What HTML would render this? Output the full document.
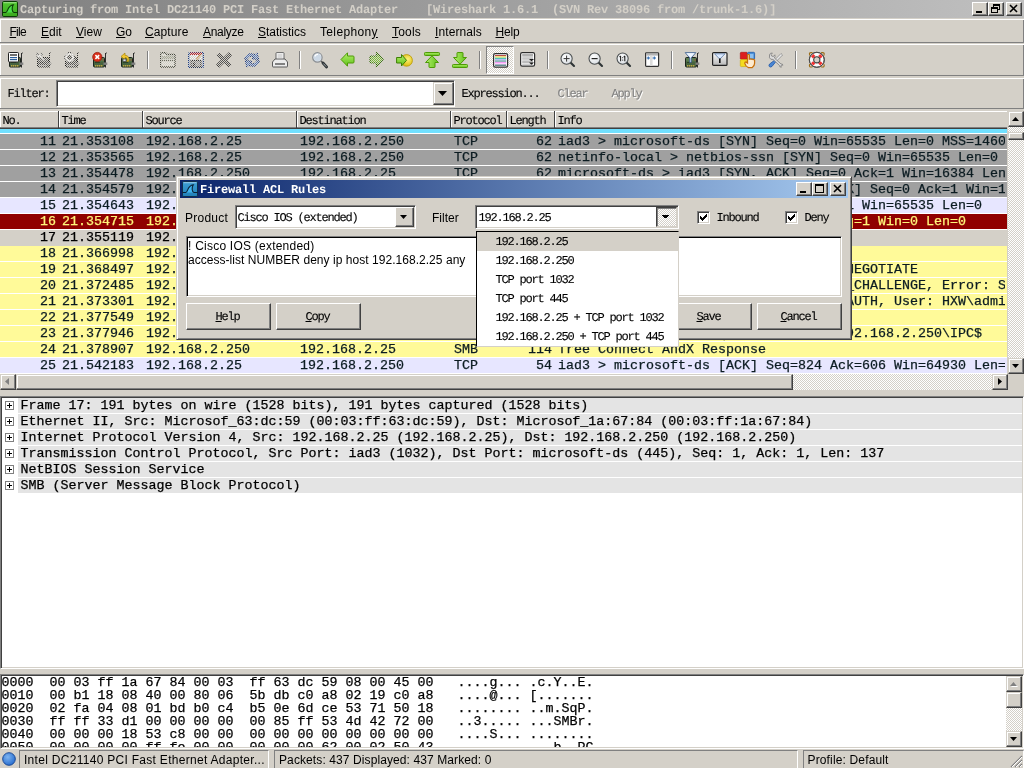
<!DOCTYPE html>
<html><head><meta charset="utf-8"><title>Wireshark</title><style>
*{box-sizing:border-box;margin:0;padding:0}
html,body{width:1024px;height:768px;overflow:hidden;background:#d4d0c8;font-family:"Liberation Sans",sans-serif;color:#000}
.a{position:absolute}
.t{position:absolute;white-space:pre;line-height:1}
.mono{font-family:"Liberation Mono",monospace;font-size:13.333px;-webkit-text-stroke-width:0.25px}
.sim{font-family:"Liberation Mono",monospace;font-size:12px;letter-spacing:-1.2px;text-rendering:geometricPrecision;margin-left:-0.5px;margin-top:0px;-webkit-text-stroke-width:0.1px}
.simb{font-family:"Liberation Mono",monospace;font-size:12px;letter-spacing:-0.2px;font-weight:bold;text-rendering:geometricPrecision}
.tah{font-family:"Liberation Sans",sans-serif;font-size:12px;}
.row{position:absolute;left:0;width:1007px;height:15px;overflow:hidden}
.row span{position:absolute;top:1px;white-space:pre;line-height:14px;font-family:"Liberation Mono",monospace;font-size:13.333px;-webkit-text-stroke-width:0.25px}
.raised{border:1px solid;border-color:#fff #404040 #404040 #fff;box-shadow:inset -1px -1px 0 #808080,inset 1px 1px 0 #d4d0c8;background:#d4d0c8}
.btn{position:absolute;background:#d4d0c8;border:1px solid;border-color:#fff #404040 #404040 #fff;box-shadow:inset -1px -1px 0 #808080}
.btn2{position:absolute;background:#d4d0c8;border:1px solid;border-color:#d4d0c8 #404040 #404040 #d4d0c8;box-shadow:inset -1px -1px 0 #808080,inset 1px 1px 0 #fff}
.sunk{position:absolute;background:#fff;border:1px solid;border-color:#808080 #fff #fff #808080;box-shadow:inset 1px 1px 0 #404040,inset -1px -1px 0 #d4d0c8}
.dither{background-image:conic-gradient(#fff 25%,#d4d0c8 0 50%,#fff 0 75%,#d4d0c8 0);background-size:2px 2px}
u{text-decoration:underline;text-underline-offset:1px}
</style></head><body><div id="root" style="position:absolute;left:0;top:0;width:1024px;height:768px;will-change:transform">
<div class="a" style="left:0;top:0;width:1024px;height:18px;background:linear-gradient(90deg,#808080,#c0c0c0)"></div>
<svg class="a" style="left:2px;top:1px" width="16" height="16" viewBox="0 0 16 16"><defs><linearGradient id="wg" x1="0" y1="0" x2="0" y2="1"><stop offset="0" stop-color="#52c832"/><stop offset="1" stop-color="#3aa81e"/></linearGradient></defs><rect x="0.5" y="0.5" width="15" height="15" rx="1.2" fill="url(#wg)" stroke="#0c3c06"/><rect x="1.5" y="1.2" width="13" height="1" fill="#fff" opacity=".45"/><path d="M4 11.5 C6 11 5.5 4.5 11.3 3.8 C9.8 6.5 10 10.5 12 11.5 Z" fill="#4ae04a"/><path d="M0.5 11.5 H3.8 C6 11.5 5.2 4.4 11.3 3.8 C9.6 6.5 9.8 11 12 11.5 H15.5" fill="none" stroke="#0c3c06" stroke-width="1.1"/></svg>
<div class="t simb" style="left:20px;top:4px;color:#d4d0c8">Capturing from Intel DC21140 PCI Fast Ethernet Adapter    [Wireshark 1.6.1  (SVN Rev 38096 from /trunk-1.6)]</div>
<div class="btn" style="left:972px;top:2px;width:16px;height:14px"></div>
<div class="btn" style="left:988px;top:2px;width:16px;height:14px"></div>
<div class="btn" style="left:1006px;top:2px;width:16px;height:14px"></div>
<div class="a" style="left:976px;top:11px;width:6px;height:2px;background:#000"></div>
<svg class="a" style="left:988px;top:2px" width="16" height="14"><rect x="5.5" y="2.5" width="6" height="5" fill="none" stroke="#000"/><rect x="5" y="2" width="7" height="2" fill="#000"/><rect x="3.5" y="5.5" width="6" height="5" fill="#d4d0c8" stroke="#000"/><rect x="3" y="5" width="7" height="2" fill="#000"/></svg>
<svg class="a" style="left:1006px;top:2px" width="16" height="14"><path d="M4 3 L11 10 M11 3 L4 10" stroke="#000" stroke-width="1.6"/></svg>
<div class="a" style="left:0;top:19px;width:1024px;height:1px;background:#fff"></div>
<div class="a" style="left:0;top:42px;width:1024px;height:1px;background:#808080"></div>
<div class="a" style="left:0;top:44px;width:1024px;height:1px;background:#fff"></div>
<div class="a" style="left:0;top:19px;width:1px;height:23px;background:#fff"></div>
<div class="a" style="left:1023px;top:20px;width:1px;height:22px;background:#808080"></div>
<div class="a" style="left:0;top:44px;width:1px;height:31px;background:#fff"></div>
<div class="a" style="left:1023px;top:45px;width:1px;height:30px;background:#808080"></div>
<div class="a" style="left:0;top:78px;width:1px;height:30px;background:#fff"></div>
<div class="a" style="left:1023px;top:79px;width:1px;height:29px;background:#808080"></div>
<div class="t tah" style="left:9.5px;top:26px;letter-spacing:-0.75px"><u>F</u>ile</div>
<div class="t tah" style="left:41px;top:26px;letter-spacing:0px"><u>E</u>dit</div>
<div class="t tah" style="left:76px;top:26px;letter-spacing:0px"><u>V</u>iew</div>
<div class="t tah" style="left:116px;top:26px;letter-spacing:0px"><u>G</u>o</div>
<div class="t tah" style="left:145px;top:26px;letter-spacing:0.1px"><u>C</u>apture</div>
<div class="t tah" style="left:203px;top:26px;letter-spacing:-0.3px"><u>A</u>nalyze</div>
<div class="t tah" style="left:258px;top:26px;letter-spacing:0px"><u>S</u>tatistics</div>
<div class="t tah" style="left:320px;top:26px;letter-spacing:0.35px">Telephon<u>y</u></div>
<div class="t tah" style="left:392px;top:26px;letter-spacing:0.2px"><u>T</u>ools</div>
<div class="t tah" style="left:435px;top:26px;letter-spacing:0.1px"><u>I</u>nternals</div>
<div class="t tah" style="left:495.5px;top:26px;letter-spacing:-0.2px"><u>H</u>elp</div>
<div class="a" style="left:0;top:75px;width:1024px;height:1px;background:#808080"></div>
<div class="a" style="left:0;top:78px;width:1024px;height:1px;background:#fff"></div>
<svg width="0" height="0" style="position:absolute"><defs><pattern id="chk" width="2" height="2" patternUnits="userSpaceOnUse"><rect width="2" height="2" fill="#000"/><rect x="0" y="0" width="1" height="1" fill="#fff"/><rect x="1" y="1" width="1" height="1" fill="#fff"/></pattern><mask id="dm" maskUnits="userSpaceOnUse" x="0" y="0" width="16" height="16"><rect width="16" height="16" fill="url(#chk)"/></mask><linearGradient id="gg" x1="0" y1="0" x2="0" y2="1"><stop offset="0" stop-color="#b4ee6a"/><stop offset="1" stop-color="#5fc21a"/></linearGradient><linearGradient id="gg2" x1="0" y1="0" x2="1" y2="0"><stop offset="0" stop-color="#b4ee6a"/><stop offset="1" stop-color="#5fc21a"/></linearGradient><linearGradient id="gry" x1="0" y1="0" x2="0" y2="1"><stop offset="0" stop-color="#fdfdfd"/><stop offset="1" stop-color="#b8b8b8"/></linearGradient><radialGradient id="lens" cx="40%" cy="35%" r="70%"><stop offset="0" stop-color="#ffffff"/><stop offset="1" stop-color="#d8dde2"/></radialGradient><radialGradient id="yel" cx="60%" cy="40%" r="70%"><stop offset="0" stop-color="#fff27a"/><stop offset="1" stop-color="#d6b400"/></radialGradient><g id="card"><path d="M13.5 1.5 L14.8 0.8" stroke="#2b2b2b" stroke-width="1"/><rect x="13" y="1" width="1" height="14.5" fill="#2b2b2b"/><rect x="1.5" y="5.5" width="11" height="9.5" rx="1" fill="#46633f" stroke="#1c241c"/><rect x="2" y="6" width="10" height="3.5" fill="#587a50"/><rect x="3" y="10" width="5" height="1" fill="#2c4428"/><rect x="3" y="13" width="1.4" height="1.6" fill="#b9a546"/><rect x="5" y="13" width="1.4" height="1.6" fill="#b9a546"/><rect x="7" y="13" width="1.4" height="1.6" fill="#b9a546"/><rect x="9" y="13" width="1.4" height="1.6" fill="#b9a546"/><rect x="11.5" y="10.5" width="3.8" height="2.4" fill="#808080"/><rect x="10.5" y="7.5" width="1" height="1" fill="#d03a2a"/></g><g id="cardg"><path d="M13.5 1.5 L14.8 0.8" stroke="#2b2b2b" stroke-width="1"/><rect x="13" y="1" width="1" height="14.5" fill="#2b2b2b"/><rect x="1.5" y="5.5" width="11" height="9.5" rx="1" fill="#565656" stroke="#202020"/><rect x="2" y="6" width="10" height="3.5" fill="#6b6b6b"/><rect x="3" y="10" width="5" height="1" fill="#393939"/><rect x="3" y="13" width="1.4" height="1.6" fill="#a0a0a0"/><rect x="5" y="13" width="1.4" height="1.6" fill="#a0a0a0"/><rect x="7" y="13" width="1.4" height="1.6" fill="#a0a0a0"/><rect x="9" y="13" width="1.4" height="1.6" fill="#a0a0a0"/><rect x="11.5" y="10.5" width="3.8" height="2.4" fill="#7f7f7f"/><rect x="10.5" y="7.5" width="1" height="1" fill="#656565"/></g><g id="mag"><path d="M9.5 9.5 L14 14" stroke="#2e3436" stroke-width="2.1" stroke-linecap="round"/><circle cx="6.6" cy="6.6" r="5.6" fill="url(#lens)" stroke="#4a4e50" stroke-width="1.05"/></g></defs></svg>
<svg class="a" style="left:8px;top:52px;overflow:visible" width="16" height="16" viewBox="0 0 16 16"><use href="#card"/><rect x="0.5" y="0.5" width="10" height="9.5" rx="0.8" fill="#fff" stroke="#222"/><rect x="2" y="2" width="7" height="2" fill="#707070"/><rect x="2" y="5" width="7" height="1.2" fill="#2d5f9a"/><rect x="2" y="7" width="7" height="1.2" fill="#2d5f9a"/></svg>
<svg class="a" style="left:36px;top:52px;overflow:visible" width="16" height="16" viewBox="0 0 16 16"><g mask="url(#dm)"><use href="#cardg"/><path d="M1.2 0.8 L3.2 3 L5.4 0.8 Q7 2.6 5.6 4.6 L9 8.4 L7.4 9.8 L4 6 Q1.6 6.6 0.6 4 Z" fill="#f0f0f0" stroke="#555" stroke-width=".9"/></g></svg>
<svg class="a" style="left:64px;top:52px;overflow:visible" width="16" height="16" viewBox="0 0 16 16"><g mask="url(#dm)"><use href="#cardg"/><circle cx="5.6" cy="5.4" r="5" fill="#f4f4f4" stroke="#444" stroke-width="1"/><circle cx="5.6" cy="5.4" r="2.4" fill="#555"/></g></svg>
<svg class="a" style="left:92px;top:52px;overflow:visible" width="16" height="16" viewBox="0 0 16 16"><use href="#card"/><circle cx="5.3" cy="5" r="4.6" fill="#d8301c" stroke="#9a1c0e" stroke-width=".8"/><path d="M3.4 3.1 L7.2 6.9 M7.2 3.1 L3.4 6.9" stroke="#fff" stroke-width="1.5"/></svg>
<svg class="a" style="left:120px;top:52px;overflow:visible" width="16" height="16" viewBox="0 0 16 16"><use href="#card"/><path d="M8.5 9.5 C10 6 8 3.2 5 3.4 V1 L1 4.5 L5 8 V5.8 C7 5.6 8 7 6.8 9.5 Z" fill="#f2c830" stroke="#a8820a" stroke-width=".7"/><rect x="3" y="7" width="3" height="2.5" fill="#d8dde8" stroke="#333" stroke-width=".6"/></svg>
<div class="a" style="left:147px;top:51px;width:1px;height:18px;background:#808080"></div><div class="a" style="left:148px;top:51px;width:1px;height:18px;background:#fff"></div>
<div class="a" style="left:299px;top:51px;width:1px;height:18px;background:#808080"></div><div class="a" style="left:300px;top:51px;width:1px;height:18px;background:#fff"></div>
<div class="a" style="left:479px;top:51px;width:1px;height:18px;background:#808080"></div><div class="a" style="left:480px;top:51px;width:1px;height:18px;background:#fff"></div>
<div class="a" style="left:547px;top:51px;width:1px;height:18px;background:#808080"></div><div class="a" style="left:548px;top:51px;width:1px;height:18px;background:#fff"></div>
<div class="a" style="left:671px;top:51px;width:1px;height:18px;background:#808080"></div><div class="a" style="left:672px;top:51px;width:1px;height:18px;background:#fff"></div>
<div class="a" style="left:795px;top:51px;width:1px;height:18px;background:#808080"></div><div class="a" style="left:796px;top:51px;width:1px;height:18px;background:#fff"></div>
<svg class="a" style="left:160px;top:52px;overflow:visible" width="16" height="16" viewBox="0 0 16 16"><g mask="url(#dm)"><path d="M0.5 2 Q0.5 0.8 1.5 0.8 H5.5 L7 2.5 H14 Q15 2.5 15 3.5 V14 Q15 15 14 15 H1.5 Q0.5 15 0.5 14 Z" fill="#e4e4dc" stroke="#44473c" stroke-width="1.4"/><path d="M1 8.5 H15" stroke="#6a6d60" stroke-width="1.2"/><rect x="2" y="4" width="12" height="3" fill="#a8ab9a"/></g></svg>
<svg class="a" style="left:188px;top:52px;overflow:visible" width="16" height="16" viewBox="0 0 16 16"><g mask="url(#dm)"><rect x="0.6" y="0.6" width="14.8" height="14.8" rx="1.5" fill="#f4f4f4" stroke="#1d3f8a" stroke-width="1.6"/><rect x="2" y="0.5" width="12" height="2.5" fill="#c0202a"/><rect x="3" y="8.5" width="10" height="6.5" fill="#9a9a9a" stroke="#333" stroke-width="1.2"/><rect x="5" y="10.5" width="2.2" height="3.5" fill="#333"/><path d="M13 2.5 L8.5 7.5" stroke="#c27a20" stroke-width="1.6"/></g></svg>
<svg class="a" style="left:216px;top:52px;overflow:visible" width="16" height="16" viewBox="0 0 16 16"><g mask="url(#dm)"><path d="M3.2 0.8 L8 5.4 L12.8 0.8 L15.4 3.4 L10.7 8 L15.4 12.6 L12.8 15.2 L8 10.6 L3.2 15.2 L0.6 12.6 L5.3 8 L0.6 3.4 Z" fill="#555" stroke="#2a2a2a" stroke-width=".8"/></g></svg>
<svg class="a" style="left:244px;top:52px;overflow:visible" width="16" height="16" viewBox="0 0 16 16"><g mask="url(#dm)"><path d="M0.8 7.2 C1 2.5 6.5 0.2 11 2.8 L13.2 0.8 L14.6 7.4 L8 6.8 L9.8 4.8 C7.4 3.6 4 4.4 3.6 7.2 Z" fill="#5a7fc4" stroke="#16357e" stroke-width="1"/><path d="M15.2 8.8 C15 13.5 9.5 15.8 5 13.2 L2.8 15.2 L1.4 8.6 L8 9.2 L6.2 11.2 C8.6 12.4 12 11.6 12.4 8.8 Z" fill="#5a7fc4" stroke="#16357e" stroke-width="1"/></g></svg>
<svg class="a" style="left:272px;top:52px;overflow:visible" width="16" height="16" viewBox="0 0 16 16"><path d="M4 7 V1.2 Q4 0.6 4.6 0.6 H11.4 Q12 0.6 12 1.2 V7" fill="#fafafa" stroke="#666" stroke-width="1"/><path d="M5.5 3 H10.5 M5.5 5 H10.5" stroke="#b8b8b8" stroke-width="1"/><path d="M1 15 Q0.5 15 0.5 14.3 V10 L3 7 H13 L15.5 10 V14.3 Q15.5 15 15 15 Z" fill="#ececec" stroke="#5a5a5a" stroke-width="1"/><rect x="3" y="11.3" width="10" height="1.4" fill="#555"/></svg>
<svg class="a" style="left:312px;top:52px;overflow:visible" width="16" height="16" viewBox="0 0 16 16"><path d="M9 9 L11 11" stroke="#555" stroke-width="1.6"/><path d="M11 11 L14.6 15" stroke="#2e3436" stroke-width="2.8" stroke-linecap="round"/><path d="M11.6 11.8 L14 14.4" stroke="#9aa0a4" stroke-width="1" stroke-linecap="round"/><circle cx="5.4" cy="5.4" r="4.7" fill="#dfe6ee" stroke="#8a8f94" stroke-width="1.2"/><circle cx="5.4" cy="5.4" r="3.5" fill="#cdd9e6"/><path d="M2.8 4.5 A3 3 0 0 1 6 2.4" stroke="#fff" stroke-width="1.2" fill="none"/></svg>
<svg class="a" style="left:340px;top:52px;overflow:visible" width="16" height="16" viewBox="0 0 16 16"><path d="M1 7.5 L7.5 0.8 V4 H13 Q14 4 14 5 V10 Q14 11 13 11 H7.5 V14.2 Z" fill="url(#gg)" stroke="#4e9a06" stroke-width="1"/></svg>
<svg class="a" style="left:368px;top:52px;overflow:visible" width="16" height="16" viewBox="0 0 16 16"><g mask="url(#dm)"><path d="M15 7.5 L8.5 0.8 V4 H3 Q2 4 2 5 V10 Q2 11 3 11 H8.5 V14.2 Z" fill="#7cc436" stroke="#2f6a04" stroke-width="1.2"/></g></svg>
<svg class="a" style="left:396px;top:52px;overflow:visible" width="16" height="16" viewBox="0 0 16 16"><circle cx="10.6" cy="8.4" r="5.8" fill="url(#yel)" stroke="#b89600" stroke-width=".8"/><path d="M10.5 8.3 L5.5 2.5 V5.5 H0.6 V11 H5.5 V14 Z" fill="url(#gg)" stroke="#3f7f05" stroke-width="1"/></svg>
<svg class="a" style="left:424px;top:52px;overflow:visible" width="16" height="16" viewBox="0 0 16 16"><rect x="0.5" y="0.5" width="15" height="3" rx="0.8" fill="url(#gg)" stroke="#4e9a06"/><path d="M8 3.8 L14.5 10.5 H11 V15 Q11 15.5 10.5 15.5 H5.5 Q5 15.5 5 15 V10.5 H1.5 Z" fill="url(#gg2)" stroke="#4e9a06" stroke-width="1"/></svg>
<svg class="a" style="left:452px;top:52px;overflow:visible" width="16" height="16" viewBox="0 0 16 16"><rect x="0.5" y="12.5" width="15" height="3" rx="0.8" fill="url(#gg)" stroke="#4e9a06"/><path d="M8 12.2 L14.5 5.5 H11 V1 Q11 0.5 10.5 0.5 H5.5 Q5 0.5 5 1 V5.5 H1.5 Z" fill="url(#gg2)" stroke="#4e9a06" stroke-width="1"/></svg>
<div class="a dither" style="left:486px;top:46px;width:28px;height:28px;border:1px solid;border-color:#808080 #fff #fff #808080"></div>
<svg class="a" style="left:493px;top:53px;overflow:visible" width="16" height="16" viewBox="0 0 16 16"><rect x="0.6" y="0.6" width="14" height="13.6" rx="1.6" fill="#fff" stroke="#2e2e2e" stroke-width="1.2"/><rect x="2" y="2" width="11.2" height="1.3" fill="#b84848"/><rect x="2" y="3.3" width="11.2" height="1.4" fill="#f2ea6a"/><rect x="2" y="4.7" width="11.2" height="1.4" fill="#4fc4b4"/><rect x="2" y="6.1" width="11.2" height="1.4" fill="#b4b4f4"/><rect x="2" y="7.5" width="11.2" height="1.3" fill="#5aa894"/><rect x="2" y="8.8" width="11.2" height="1.4" fill="#f49cf4"/><rect x="2" y="10.2" width="11.2" height="1.4" fill="#ffc8ff"/><rect x="2" y="11.6" width="11.2" height="1.2" fill="#3e7474"/></svg>
<svg class="a" style="left:520px;top:52px;overflow:visible" width="16" height="16" viewBox="0 0 16 16"><rect x="0.6" y="0.6" width="14" height="13.6" rx="1.6" fill="#fff" stroke="#2e2e2e" stroke-width="1.2"/><rect x="2.2" y="2" width="10.8" height="2.6" fill="#b0b0b0"/><rect x="2.2" y="5.2" width="10.8" height="2.6" fill="#c6c6c6"/><rect x="2.2" y="8.4" width="10.8" height="2.6" fill="#bcbcbc"/><rect x="2.2" y="11.4" width="10.8" height="1.6" fill="#d0d0d0"/><path d="M9 7 H14 L11.5 9.2 Z M9 10.5 H14 L11.5 12.8 Z" fill="#1a1a1a"/></svg>
<svg class="a" style="left:560px;top:52px;overflow:visible" width="16" height="16" viewBox="0 0 16 16"><use href="#mag"/><path d="M3.6 6.6 H9.6 M6.6 3.6 V9.6" stroke="#333" stroke-width="1"/></svg>
<svg class="a" style="left:588px;top:52px;overflow:visible" width="16" height="16" viewBox="0 0 16 16"><use href="#mag"/><path d="M3.6 6.6 H9.6" stroke="#222" stroke-width="1.2"/></svg>
<svg class="a" style="left:616px;top:52px;overflow:visible" width="16" height="16" viewBox="0 0 16 16"><use href="#mag"/><path d="M4.6 4 V9.2 M3.6 5 L4.6 4 M8.8 4 V9.2 M7.8 5 L8.8 4" stroke="#222" stroke-width="1.1" fill="none"/><rect x="6.2" y="5.2" width="1" height="1" fill="#222"/><rect x="6.2" y="7.6" width="1" height="1" fill="#222"/></svg>
<svg class="a" style="left:644px;top:52px;overflow:visible" width="16" height="16" viewBox="0 0 16 16"><rect x="1.6" y="0.8" width="13" height="13.6" rx="0.8" fill="#fff" stroke="#333" stroke-width="1.2"/><rect x="2.2" y="1.4" width="11.8" height="2.2" fill="#b4b4b4"/><rect x="6" y="3.6" width="2.6" height="10.2" fill="#dcdcdc"/><path d="M2.6 6 H6 M4.3 4.5 V7.5 M8.6 6 H12 M10.3 4.5 V7.5" stroke="#2f6ab0" stroke-width="1.1"/></svg>
<svg class="a" style="left:684px;top:52px;overflow:visible" width="16" height="16" viewBox="0 0 16 16"><use href="#card"/><path d="M1.2 0.6 H11.8 L7.3 6 V10.5 H5.7 V6 Z" fill="#cfe0f4" stroke="#3a5a8a" stroke-width=".8"/><path d="M2.5 1.2 H10.5 L6.5 5.5 Z" fill="#eef5ff"/></svg>
<svg class="a" style="left:712px;top:52px;overflow:visible" width="16" height="16" viewBox="0 0 16 16"><rect x="0.6" y="0.6" width="14.4" height="12.8" rx="1" fill="url(#gry)" stroke="#222" stroke-width="1.2"/><path d="M2.6 1.8 H13 L7.8 7.2 Z" fill="#dceaff" stroke="#4a6a9a" stroke-width=".7"/><rect x="7" y="6.5" width="1.6" height="4.5" fill="#111"/></svg>
<svg class="a" style="left:740px;top:52px;overflow:visible" width="16" height="16" viewBox="0 0 16 16"><rect x="0.3" y="0.3" width="7" height="7" rx="1" fill="#dc1e1e" stroke="#a01010" stroke-width=".6"/><rect x="7.6" y="0.3" width="7" height="7" rx="1" fill="#4a90d9" stroke="#1c58a8" stroke-width=".8"/><rect x="9" y="2" width="4.4" height="4.4" fill="#8cc0f0"/><rect x="0.3" y="7.6" width="7" height="7" rx="1" fill="#f4dc1e" stroke="#c8a800" stroke-width=".6"/><path transform="translate(-1.6,-1.9) scale(1.14)" d="M8 4.2 Q8.9 3.4 9.6 4.2 V8 H10.4 Q11 7.4 11.6 8 Q12.3 7.6 12.9 8.3 Q13.6 8 14.2 8.8 V11.5 Q14.2 14 12 15.4 H8.8 Q6.4 14.4 5.6 11.6 Q5.6 10.4 6.6 10.4 L8 11.4 Z" fill="#fdebd0" stroke="#c8700c" stroke-width="1.1"/></svg>
<svg class="a" style="left:768px;top:52px;overflow:visible" width="16" height="16" viewBox="0 0 16 16"><path d="M13 1.5 L14.6 3 L8.5 9.2 L7 7.6 Z" fill="#e8e8e8" stroke="#8a8a8a" stroke-width=".8"/><path d="M7.2 7.8 L8.4 9 L4 14.4 Q2.6 15.6 1.4 14.6 Q0.4 13.4 1.6 12 Z" fill="#4a86d4" stroke="#1f55a4" stroke-width=".8"/><path d="M1.5 2.6 Q2.2 0.8 4.4 1 L3 2.6 L3.8 4.2 L5.6 4.4 L6.8 2.8 Q7.6 4.6 6.4 6 L13 12 Q14.6 11.6 15 13.2 L13.6 13 L12.8 14 L13.4 15.2 Q11.4 15.4 11.4 13.4 L5 7.4 Q2.6 8 1.5 5.8 Z" fill="#dcdcdc" stroke="#7c7c7c" stroke-width=".8"/></svg>
<svg class="a" style="left:808px;top:51px;overflow:visible" width="18" height="18" viewBox="0 0 18 18"><path d="M1.8 4.6 Q0.2 0.8 4.6 1.8 M13 1.8 Q17.4 0.8 15.8 4.6 M15.8 13 Q17.4 17 13 15.8 M4.6 15.8 Q0.2 17 1.8 13" fill="none" stroke="#9a6a14" stroke-width="1.1"/><circle cx="8.8" cy="8.8" r="7.5" fill="#fafafa" stroke="#4a4a4a" stroke-width="1"/><g stroke="#f23030" stroke-width="3.4" fill="none"><path d="M4.2 4.2 L6.2 6.2"/><path d="M13.4 4.2 L11.4 6.2"/><path d="M4.2 13.4 L6.2 11.4"/><path d="M13.4 13.4 L11.4 11.4"/></g><circle cx="8.8" cy="8.8" r="7.5" fill="none" stroke="#4a4a4a" stroke-width="1"/><circle cx="8.8" cy="8.8" r="3.1" fill="#d4d0c8" stroke="#3a3a3a" stroke-width="1.1"/></svg>
<div class="t sim" style="left:8px;top:88px">Filter:</div>
<div class="sunk" style="left:56px;top:80px;width:399px;height:27px"></div>
<div class="btn2" style="left:433px;top:82px;width:21px;height:23px"></div>
<svg class="a" style="left:438px;top:91px" width="9" height="5"><path d="M0 0 H9 L4.5 5 Z" fill="#000"/></svg>
<div class="t sim" style="left:462px;top:88px">Expression...</div>
<div class="t sim" style="left:558px;top:88px;color:#808080;text-shadow:1px 1px 0 #fff">Clear</div>
<div class="t sim" style="left:612px;top:88px;color:#808080;text-shadow:1px 1px 0 #fff">Apply</div>
<div class="a" style="left:0;top:108px;width:1024px;height:1px;background:#808080"></div>
<div class="a" style="left:0;top:111px;width:1007px;height:18px;background:#d4d0c8;border-top:1px solid #fff;border-bottom:2px solid #404040"></div>
<div class="a" style="left:0;top:127px;width:1007px;height:1px;background:#808080"></div>
<div class="a" style="left:0px;top:111px;width:1px;height:16px;background:#fff"></div>
<div class="a" style="left:58px;top:111px;width:1px;height:17px;background:#404040"></div>
<div class="t sim" style="left:3px;top:115px">No.</div>
<div class="a" style="left:59px;top:111px;width:1px;height:16px;background:#fff"></div>
<div class="a" style="left:142px;top:111px;width:1px;height:17px;background:#404040"></div>
<div class="t sim" style="left:62px;top:115px">Time</div>
<div class="a" style="left:143px;top:111px;width:1px;height:16px;background:#fff"></div>
<div class="a" style="left:296px;top:111px;width:1px;height:17px;background:#404040"></div>
<div class="t sim" style="left:146px;top:115px">Source</div>
<div class="a" style="left:297px;top:111px;width:1px;height:16px;background:#fff"></div>
<div class="a" style="left:450px;top:111px;width:1px;height:17px;background:#404040"></div>
<div class="t sim" style="left:300px;top:115px">Destination</div>
<div class="a" style="left:451px;top:111px;width:1px;height:16px;background:#fff"></div>
<div class="a" style="left:506px;top:111px;width:1px;height:17px;background:#404040"></div>
<div class="t sim" style="left:454px;top:115px">Protocol</div>
<div class="a" style="left:507px;top:111px;width:1px;height:16px;background:#fff"></div>
<div class="a" style="left:554px;top:111px;width:1px;height:17px;background:#404040"></div>
<div class="t sim" style="left:510px;top:115px">Length</div>
<div class="a" style="left:555px;top:111px;width:1px;height:16px;background:#fff"></div>
<div class="t sim" style="left:558px;top:115px">Info</div>
<div class="a" style="left:0;top:129px;width:1007px;height:245px;background:#fff"></div>
<div class="a" style="left:0;top:129px;width:1007px;height:4px;background:#70e0ff"></div>
<div class="row" style="top:134px;background:#a0a0a0;color:#0c1c22"><span style="left:0;width:56px;text-align:right">11</span><span style="left:62px">21.353108</span><span style="left:146px">192.168.2.25</span><span style="left:300px">192.168.2.250</span><span style="left:454px">TCP</span><span style="left:504px;width:48px;text-align:right">62</span><span style="left:558px;width:447px;overflow:hidden">iad3 &gt; microsoft-ds [SYN] Seq=0 Win=65535 Len=0 MSS=1460 SACK_PERM=1</span></div>
<div class="row" style="top:150px;background:#a0a0a0;color:#0c1c22"><span style="left:0;width:56px;text-align:right">12</span><span style="left:62px">21.353565</span><span style="left:146px">192.168.2.25</span><span style="left:300px">192.168.2.250</span><span style="left:454px">TCP</span><span style="left:504px;width:48px;text-align:right">62</span><span style="left:558px;width:447px;overflow:hidden">netinfo-local &gt; netbios-ssn [SYN] Seq=0 Win=65535 Len=0 MSS=1460</span></div>
<div class="row" style="top:166px;background:#a0a0a0;color:#0c1c22"><span style="left:0;width:56px;text-align:right">13</span><span style="left:62px">21.354478</span><span style="left:146px">192.168.2.250</span><span style="left:300px">192.168.2.25</span><span style="left:454px">TCP</span><span style="left:504px;width:48px;text-align:right">62</span><span style="left:558px;width:447px;overflow:hidden">microsoft-ds &gt; iad3 [SYN, ACK] Seq=0 Ack=1 Win=16384 Len=0 MSS=1460</span></div>
<div class="row" style="top:182px;background:#a0a0a0;color:#0c1c22"><span style="left:0;width:56px;text-align:right">14</span><span style="left:62px">21.354579</span><span style="left:146px">192.168.2.250</span><span style="left:300px">192.168.2.25</span><span style="left:454px">TCP</span><span style="left:504px;width:48px;text-align:right">62</span><span style="left:558px;width:447px;overflow:hidden">netbios-ssn &gt; netinfo-local [SYN, ACK] Seq=0 Ack=1 Win=16384</span></div>
<div class="row" style="top:198px;background:#e7e6ff;color:#0c1c22"><span style="left:0;width:56px;text-align:right">15</span><span style="left:62px">21.354643</span><span style="left:146px">192.168.2.25</span><span style="left:300px">192.168.2.250</span><span style="left:454px">TCP</span><span style="left:504px;width:48px;text-align:right">54</span><span style="left:558px;width:447px;overflow:hidden">iad3 &gt; microsoft-ds [ACK] Seq=1 Ack=1 Win=65535 Len=0</span></div>
<div class="row" style="top:214px;background:#900000;color:#fff47a"><span style="left:0;width:56px;text-align:right">16</span><span style="left:62px">21.354715</span><span style="left:146px">192.168.2.25</span><span style="left:300px">192.168.2.250</span><span style="left:454px">TCP</span><span style="left:504px;width:48px;text-align:right">54</span><span style="left:558px;width:447px;overflow:hidden">netinfo-local &gt; netbios-ssn [RST] Seq=1 Win=0 Len=0</span></div>
<div class="row" style="top:230px;background:#d4d0c8;color:#000;height:16px"><span style="left:0;width:56px;text-align:right">17</span><span style="left:62px">21.355119</span><span style="left:146px">192.168.2.25</span><span style="left:300px">192.168.2.250</span><span style="left:454px">SMB</span><span style="left:504px;width:48px;text-align:right">191</span><span style="left:558px;width:447px;overflow:hidden">Negotiate Protocol Request</span></div>
<div class="row" style="top:246px;background:#fffa99;color:#0c1c22"><span style="left:0;width:56px;text-align:right">18</span><span style="left:62px">21.366998</span><span style="left:146px">192.168.2.250</span><span style="left:300px">192.168.2.25</span><span style="left:454px">SMB</span><span style="left:504px;width:48px;text-align:right">143</span><span style="left:558px;width:447px;overflow:hidden">Negotiate Protocol Response</span></div>
<div class="row" style="top:262px;background:#fffa99;color:#0c1c22"><span style="left:0;width:56px;text-align:right">19</span><span style="left:62px">21.368497</span><span style="left:146px">192.168.2.25</span><span style="left:300px">192.168.2.250</span><span style="left:454px">SMB</span><span style="left:504px;width:48px;text-align:right">294</span><span style="left:558px;width:447px;overflow:hidden">Session Setup AndX Request, NTLMSSP_NEGOTIATE</span></div>
<div class="row" style="top:278px;background:#fffa99;color:#0c1c22"><span style="left:0;width:56px;text-align:right">20</span><span style="left:62px">21.372485</span><span style="left:146px">192.168.2.250</span><span style="left:300px">192.168.2.25</span><span style="left:454px">SMB</span><span style="left:504px;width:48px;text-align:right">438</span><span style="left:558px;width:447px;overflow:hidden">Session Setup AndX Response, NTLMSSP_CHALLENGE, Error: STATUS_MORE</span></div>
<div class="row" style="top:294px;background:#fffa99;color:#0c1c22"><span style="left:0;width:56px;text-align:right">21</span><span style="left:62px">21.373301</span><span style="left:146px">192.168.2.25</span><span style="left:300px">192.168.2.250</span><span style="left:454px">SMB</span><span style="left:504px;width:48px;text-align:right">366</span><span style="left:558px;width:447px;overflow:hidden">Session Setup AndX Request, NTLMSSP_AUTH, User: HXW\administrator</span></div>
<div class="row" style="top:310px;background:#fffa99;color:#0c1c22"><span style="left:0;width:56px;text-align:right">22</span><span style="left:62px">21.377549</span><span style="left:146px">192.168.2.250</span><span style="left:300px">192.168.2.25</span><span style="left:454px">SMB</span><span style="left:504px;width:48px;text-align:right">185</span><span style="left:558px;width:447px;overflow:hidden">Session Setup AndX Response</span></div>
<div class="row" style="top:326px;background:#fffa99;color:#0c1c22"><span style="left:0;width:56px;text-align:right">23</span><span style="left:62px">21.377946</span><span style="left:146px">192.168.2.25</span><span style="left:300px">192.168.2.250</span><span style="left:454px">SMB</span><span style="left:504px;width:48px;text-align:right">148</span><span style="left:558px;width:447px;overflow:hidden">Tree Connect AndX Request, Path: \\192.168.2.250\IPC$</span></div>
<div class="row" style="top:342px;background:#fffa99;color:#0c1c22"><span style="left:0;width:56px;text-align:right">24</span><span style="left:62px">21.378907</span><span style="left:146px">192.168.2.250</span><span style="left:300px">192.168.2.25</span><span style="left:454px">SMB</span><span style="left:504px;width:48px;text-align:right">114</span><span style="left:558px;width:447px;overflow:hidden">Tree Connect AndX Response</span></div>
<div class="row" style="top:358px;background:#e7e6ff;color:#0c1c22"><span style="left:0;width:56px;text-align:right">25</span><span style="left:62px">21.542183</span><span style="left:146px">192.168.2.25</span><span style="left:300px">192.168.2.250</span><span style="left:454px">TCP</span><span style="left:504px;width:48px;text-align:right">54</span><span style="left:558px;width:447px;overflow:hidden">iad3 &gt; microsoft-ds [ACK] Seq=824 Ack=606 Win=64930 Len=0</span></div>
<div class="a dither" style="left:1008px;top:111px;width:16px;height:263px"></div>
<div class="btn2" style="left:1008px;top:111px;width:16px;height:16px"></div>
<svg class="a" style="left:1012px;top:117px" width="7" height="4"><path d="M0 4 H7 L3.5 0 Z" fill="#000"/></svg>
<div class="btn2" style="left:1008px;top:132px;width:16px;height:8px"></div>
<div class="btn2" style="left:1008px;top:358px;width:16px;height:16px"></div>
<svg class="a" style="left:1012px;top:364px" width="7" height="4"><path d="M0 0 H7 L3.5 4 Z" fill="#000"/></svg>
<div class="a dither" style="left:0;top:374px;width:1008px;height:16px"></div>
<div class="btn2" style="left:0;top:374px;width:16px;height:16px"></div>
<svg class="a" style="left:5px;top:378px" width="5" height="8"><path d="M4 0 V7 L0 3.5 Z" fill="#808080"/></svg>
<div class="btn2" style="left:16px;top:374px;width:777px;height:16px"></div>
<div class="btn2" style="left:992px;top:374px;width:16px;height:16px"></div>
<svg class="a" style="left:998px;top:378px" width="5" height="8"><path d="M0 0 V7 L4 3.5 Z" fill="#000"/></svg>
<div class="sunk" style="left:0;top:396px;width:1024px;height:273px"></div>
<div class="a" style="left:18px;top:398px;width:1004px;height:15px;background:#e4e4e4"></div>
<div class="a" style="left:5px;top:401px;width:9px;height:9px;border:1px solid #808080;background:#fff"></div>
<div class="a" style="left:7px;top:405px;width:5px;height:1px;background:#000"></div><div class="a" style="left:9px;top:403px;width:1px;height:5px;background:#000"></div>
<div class="t mono" style="left:20.5px;top:399px;line-height:14px">Frame 17: 191 bytes on wire (1528 bits), 191 bytes captured (1528 bits)</div>
<div class="a" style="left:18px;top:414px;width:1004px;height:15px;background:#e4e4e4"></div>
<div class="a" style="left:5px;top:417px;width:9px;height:9px;border:1px solid #808080;background:#fff"></div>
<div class="a" style="left:7px;top:421px;width:5px;height:1px;background:#000"></div><div class="a" style="left:9px;top:419px;width:1px;height:5px;background:#000"></div>
<div class="t mono" style="left:20.5px;top:415px;line-height:14px">Ethernet II, Src: Microsof_63:dc:59 (00:03:ff:63:dc:59), Dst: Microsof_1a:67:84 (00:03:ff:1a:67:84)</div>
<div class="a" style="left:18px;top:430px;width:1004px;height:15px;background:#e4e4e4"></div>
<div class="a" style="left:5px;top:433px;width:9px;height:9px;border:1px solid #808080;background:#fff"></div>
<div class="a" style="left:7px;top:437px;width:5px;height:1px;background:#000"></div><div class="a" style="left:9px;top:435px;width:1px;height:5px;background:#000"></div>
<div class="t mono" style="left:20.5px;top:431px;line-height:14px">Internet Protocol Version 4, Src: 192.168.2.25 (192.168.2.25), Dst: 192.168.2.250 (192.168.2.250)</div>
<div class="a" style="left:18px;top:446px;width:1004px;height:15px;background:#e4e4e4"></div>
<div class="a" style="left:5px;top:449px;width:9px;height:9px;border:1px solid #808080;background:#fff"></div>
<div class="a" style="left:7px;top:453px;width:5px;height:1px;background:#000"></div><div class="a" style="left:9px;top:451px;width:1px;height:5px;background:#000"></div>
<div class="t mono" style="left:20.5px;top:447px;line-height:14px">Transmission Control Protocol, Src Port: iad3 (1032), Dst Port: microsoft-ds (445), Seq: 1, Ack: 1, Len: 137</div>
<div class="a" style="left:18px;top:462px;width:1004px;height:15px;background:#e4e4e4"></div>
<div class="a" style="left:5px;top:465px;width:9px;height:9px;border:1px solid #808080;background:#fff"></div>
<div class="a" style="left:7px;top:469px;width:5px;height:1px;background:#000"></div><div class="a" style="left:9px;top:467px;width:1px;height:5px;background:#000"></div>
<div class="t mono" style="left:20.5px;top:463px;line-height:14px">NetBIOS Session Service</div>
<div class="a" style="left:18px;top:478px;width:1004px;height:15px;background:#e4e4e4"></div>
<div class="a" style="left:5px;top:481px;width:9px;height:9px;border:1px solid #808080;background:#fff"></div>
<div class="a" style="left:7px;top:485px;width:5px;height:1px;background:#000"></div><div class="a" style="left:9px;top:483px;width:1px;height:5px;background:#000"></div>
<div class="t mono" style="left:20.5px;top:479px;line-height:14px">SMB (Server Message Block Protocol)</div>
<div class="sunk" style="left:0;top:674px;width:1024px;height:75px;overflow:hidden"></div>
<div class="a" style="left:2px;top:677px;width:1004px;height:70px;overflow:hidden">
<div class="t mono" style="left:-0.4px;top:-1px;line-height:13px">0000  00 03 ff 1a 67 84 00 03  ff 63 dc 59 08 00 45 00   ....g... .c.Y..E.</div>
<div class="t mono" style="left:-0.4px;top:12px;line-height:13px">0010  00 b1 18 08 40 00 80 06  5b db c0 a8 02 19 c0 a8   ....@... [.......</div>
<div class="t mono" style="left:-0.4px;top:25px;line-height:13px">0020  02 fa 04 08 01 bd b0 c4  b5 0e 6d ce 53 71 50 18   ........ ..m.SqP.</div>
<div class="t mono" style="left:-0.4px;top:38px;line-height:13px">0030  ff ff 33 d1 00 00 00 00  00 85 ff 53 4d 42 72 00   ..3..... ...SMBr.</div>
<div class="t mono" style="left:-0.4px;top:51px;line-height:13px">0040  00 00 00 18 53 c8 00 00  00 00 00 00 00 00 00 00   ....S... ........</div>
<div class="t mono" style="left:-0.4px;top:64px;line-height:13px">0050  00 00 00 00 ff fe 00 00  00 00 00 62 00 02 50 43   ........ ...b..PC</div>
</div>
<div class="a dither" style="left:1006px;top:676px;width:16px;height:71px"></div>
<div class="btn2" style="left:1006px;top:676px;width:16px;height:16px"></div>
<svg class="a" style="left:1010px;top:682px" width="8" height="5"><path d="M1 5 H8 L4.5 1 Z" fill="#fff"/><path d="M0 4 H7 L3.5 0 Z" fill="#808080"/></svg>
<div class="btn2" style="left:1006px;top:692px;width:16px;height:16px"></div>
<div class="btn2" style="left:1006px;top:731px;width:16px;height:16px"></div>
<svg class="a" style="left:1010px;top:737px" width="7" height="4"><path d="M0 0 H7 L3.5 4 Z" fill="#000"/></svg>
<svg class="a" style="left:2px;top:752px" width="14" height="14"><defs><radialGradient id="bl" cx="40%" cy="35%" r="65%"><stop offset="0" stop-color="#7db4f0"/><stop offset="1" stop-color="#2a6fd0"/></radialGradient></defs><circle cx="7" cy="7" r="6.3" fill="url(#bl)" stroke="#1c4a94" stroke-width="1"/></svg>
<div class="a" style="left:19px;top:750px;width:250px;height:20px;border:1px solid;border-color:#808080 #fff #fff #808080"></div>
<div class="t tah" style="left:24px;top:754px;letter-spacing:0.29px">Intel DC21140 PCI Fast Ethernet Adapter...</div>
<div class="a" style="left:274px;top:750px;width:524px;height:20px;border:1px solid;border-color:#808080 #fff #fff #808080"></div>
<div class="t tah" style="left:279px;top:754px;letter-spacing:0.1px">Packets: 437 Displayed: 437 Marked: 0</div>
<div class="a" style="left:803px;top:750px;width:221px;height:20px;border:1px solid;border-color:#808080 #fff #fff #808080"></div>
<div class="t tah" style="left:807.5px;top:754px;letter-spacing:0.15px">Profile: Default</div>
<svg class="a" style="left:1010px;top:755px" width="13" height="13"><path d="M12 1 L1 12 M12 5 L5 12 M12 9 L9 12" stroke="#808080" stroke-width="1.2"/><path d="M12 2 L2 12 M12 6 L6 12 M12 10 L10 12" stroke="#fff" stroke-width="1"/></svg>
<div class="a" style="left:176px;top:176px;width:676px;height:164px;background:#d4d0c8;border:1px solid;border-color:#d4d0c8 #404040 #404040 #d4d0c8;box-shadow:inset 1px 1px 0 #fff,inset -1px -1px 0 #808080"></div>
<div class="a" style="left:180px;top:180px;width:668px;height:18px;background:linear-gradient(90deg,#0a246a,#a6caf0)"></div>
<svg class="a" style="left:182px;top:181px" width="16" height="16" viewBox="0 0 16 16"><defs><linearGradient id="wb" x1="0" y1="0" x2="0" y2="1"><stop offset="0" stop-color="#3fa0d4"/><stop offset="1" stop-color="#1f80b8"/></linearGradient></defs><rect x="0.5" y="0.5" width="15" height="15" rx="1.2" fill="url(#wb)" stroke="#10304c"/><rect x="1.5" y="1.2" width="13" height="1" fill="#fff" opacity=".45"/><path d="M4 11.5 C6 11 5.5 4.5 11.3 3.8 C9.8 6.5 10 10.5 12 11.5 Z" fill="#40b4f0"/><path d="M0.5 11.5 H3.8 C6 11.5 5.2 4.4 11.3 3.8 C9.6 6.5 9.8 11 12 11.5 H15.5" fill="none" stroke="#0a2236" stroke-width="1.1"/></svg>
<div class="t simb" style="left:200px;top:184px;color:#fff">Firewall ACL Rules</div>
<div class="btn" style="left:796px;top:182px;width:16px;height:14px"></div>
<div class="btn" style="left:812px;top:182px;width:16px;height:14px"></div>
<div class="btn" style="left:830px;top:182px;width:16px;height:14px"></div>
<div class="a" style="left:800px;top:191px;width:6px;height:2px;background:#000"></div>
<svg class="a" style="left:812px;top:182px" width="16" height="14"><rect x="3.5" y="2.5" width="8" height="8" fill="none" stroke="#000"/><rect x="3" y="2" width="9" height="2" fill="#000"/></svg>
<svg class="a" style="left:830px;top:182px" width="16" height="14"><path d="M4 3 L11 10 M11 3 L4 10" stroke="#000" stroke-width="1.6"/></svg>
<div class="t tah" style="left:185px;top:212px;letter-spacing:0.25px">Product</div>
<div class="sunk" style="left:235px;top:205px;width:181px;height:24px"></div>
<div class="t sim" style="left:238px;top:212px">Cisco IOS (extended)</div>
<div class="btn" style="left:395px;top:207px;width:19px;height:20px"></div>
<svg class="a" style="left:400px;top:215px" width="7" height="4"><path d="M0 0 H7 L3.5 4 Z" fill="#000"/></svg>
<div class="t tah" style="left:432px;top:212px">Filter</div>
<div class="sunk" style="left:475px;top:205px;width:204px;height:24px"></div>
<div class="t sim" style="left:479px;top:212px">192.168.2.25</div>
<div class="a dither" style="left:656px;top:207px;width:21px;height:20px;border:1px solid;border-color:#404040 #d4d0c8 #d4d0c8 #404040;box-shadow:inset 1px 1px 0 #808080"></div>
<svg class="a" style="left:662px;top:215px" width="7" height="3" shape-rendering="crispEdges"><path d="M0 0h7v1h-7zM1 1h5v1h-5zM2 2h3v1h-3z" fill="#000"/></svg>
<div class="sunk" style="left:697px;top:211px;width:13px;height:13px"></div>
<svg class="a" style="left:700px;top:214px" width="7" height="7" shape-rendering="crispEdges"><path d="M0 2h1v3h-1zM1 3h1v3h-1zM2 4h1v3h-1zM3 3h1v3h-1zM4 2h1v3h-1zM5 1h1v3h-1zM6 0h1v3h-1z" fill="#000"/></svg>
<div class="t sim" style="left:717px;top:212px">Inbound</div>
<div class="sunk" style="left:785px;top:211px;width:13px;height:13px"></div>
<svg class="a" style="left:788px;top:214px" width="7" height="7" shape-rendering="crispEdges"><path d="M0 2h1v3h-1zM1 3h1v3h-1zM2 4h1v3h-1zM3 3h1v3h-1zM4 2h1v3h-1zM5 1h1v3h-1zM6 0h1v3h-1z" fill="#000"/></svg>
<div class="t sim" style="left:805px;top:212px">Deny</div>
<div class="sunk" style="left:186px;top:236px;width:656px;height:61px;box-shadow:inset 1px 1px 0 #000,inset -1px -1px 0 #d4d0c8"></div>
<div class="t tah" style="left:188px;top:239px;line-height:14px;letter-spacing:0.23px">! Cisco IOS (extended)</div>
<div class="t tah" style="left:188px;top:253px;line-height:14px;letter-spacing:0.04px">access-list NUMBER deny ip host 192.168.2.25 any</div>
<div class="btn" style="left:186px;top:303px;width:85px;height:27px"></div>
<div class="t sim" style="left:216px;top:311px"><u>H</u>elp</div>
<div class="btn" style="left:276px;top:303px;width:85px;height:27px"></div>
<div class="t sim" style="left:306px;top:311px"><u>C</u>opy</div>
<div class="btn" style="left:667px;top:303px;width:85px;height:27px"></div>
<div class="t sim" style="left:697px;top:311px"><u>S</u>ave</div>
<div class="btn" style="left:757px;top:303px;width:85px;height:27px"></div>
<div class="t sim" style="left:781px;top:311px"><u>C</u>ancel</div>
<div class="a" style="left:476px;top:231px;width:203px;height:116px;background:#fff;border:1px solid;border-color:#000 #d4d0c8 #d4d0c8 #000"></div>
<div class="a" style="left:477px;top:232px;width:201px;height:19px;background:#d4d0c8"></div>
<div class="t sim" style="left:496px;top:236px">192.168.2.25</div>
<div class="t sim" style="left:496px;top:255px">192.168.2.250</div>
<div class="t sim" style="left:496px;top:274px">TCP port 1032</div>
<div class="t sim" style="left:496px;top:293px">TCP port 445</div>
<div class="t sim" style="left:496px;top:312px">192.168.2.25 + TCP port 1032</div>
<div class="t sim" style="left:496px;top:331px">192.168.2.250 + TCP port 445</div>
</div></body></html>
